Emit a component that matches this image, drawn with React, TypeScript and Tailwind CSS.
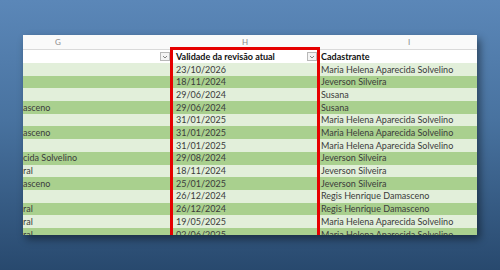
import React from "react";

interface IRow {
    g: string;
    h: string;
    i: string;
}

const rows: IRow[] = [
    { g: "", h: "23/10/2026", i: "Maria Helena Aparecida Solvelino" },
    { g: "", h: "18/11/2024", i: "Jeverson Silveira" },
    { g: "", h: "29/06/2024", i: "Susana" },
    { g: "asceno", h: "29/06/2024", i: "Susana" },
    { g: "", h: "31/01/2025", i: "Maria Helena Aparecida Solvelino" },
    { g: "asceno", h: "31/01/2025", i: "Maria Helena Aparecida Solvelino" },
    { g: "", h: "31/01/2025", i: "Maria Helena Aparecida Solvelino" },
    { g: "cida Solvelino", h: "29/08/2024", i: "Jeverson Silveira" },
    { g: "ral", h: "18/11/2024", i: "Jeverson Silveira" },
    { g: "asceno", h: "25/01/2025", i: "Jeverson Silveira" },
    { g: "", h: "26/12/2024", i: "Regis Henrique Damasceno" },
    { g: "ral", h: "26/12/2024", i: "Regis Henrique Damasceno" },
    { g: "ral", h: "19/05/2025", i: "Maria Helena Aparecida Solvelino" },
    { g: "ral", h: "02/06/2025", i: "Maria Helena Aparecida Solvelino" },
];

const FilterButton: React.FC = () => (
    <div className="w-[10px] h-[9px] border border-[#b8b8b8] bg-[#f4f4f4] flex items-center justify-center">
        <svg width="6" height="4" viewBox="0 0 6 4">
            <path d="M1 1 L3 3 L5 1" fill="none" stroke="#777" strokeWidth="0.9"/>
        </svg>
    </div>
);

const App: React.FC = () => {
    return (
        <div className="w-[500px] h-[270px] bg-[linear-gradient(180deg,#5b87b8_0%,#48729f_45%,#28496e_100%)] pt-[35px] pl-[23px] font-['Lato',sans-serif]">
            <div className="relative w-[454px] h-[200px] bg-white overflow-hidden shadow-[3px_4px_8px_rgba(0,0,0,0.45)]">
                <div className="flex h-[15px] bg-[#fafafa] border-b border-[#dadada] text-[8px] text-[#8a8a8a] leading-[15px]">
                    <div className="w-[148px] pl-[32px]">G</div>
                    <div className="w-[148px] text-center">H</div>
                    <div className="flex-1 pl-[89px]">I</div>
                </div>
                <div className="flex h-[13px] items-center text-[9px] font-bold text-[#111]">
                    <div className="w-[148px] h-full flex items-center justify-end pr-[1px]">
                        <FilterButton/>
                    </div>
                    <div className="w-[148px] h-full flex items-center justify-between pl-[5px] pr-[2px]">
                        <span>Validade da revisão atual</span>
                        <FilterButton/>
                    </div>
                    <div className="flex-1 pl-[2px]">Cadastrante</div>
                </div>
                {rows.map((row, idx) => (
                    <div
                        key={idx}
                        className={`flex h-[12.7px] items-center text-[9px] text-[#3b3b3b] whitespace-nowrap ${idx % 2 === 0 ? "bg-[#e2efda]" : "bg-[#a9d08e]"}`}
                    >
                        <div className="w-[148px] overflow-hidden">{row.g}</div>
                        <div className="w-[148px] pl-[5px]">{row.h}</div>
                        <div className="flex-1 pl-[2px]">{row.i}</div>
                    </div>
                ))}
                <div className="absolute left-[147px] top-[12px] w-[150px] h-[200px] border-t-[3px] border-x-[3px] border-[#e60000]"/>
            </div>
        </div>
    );
};

export default App;
